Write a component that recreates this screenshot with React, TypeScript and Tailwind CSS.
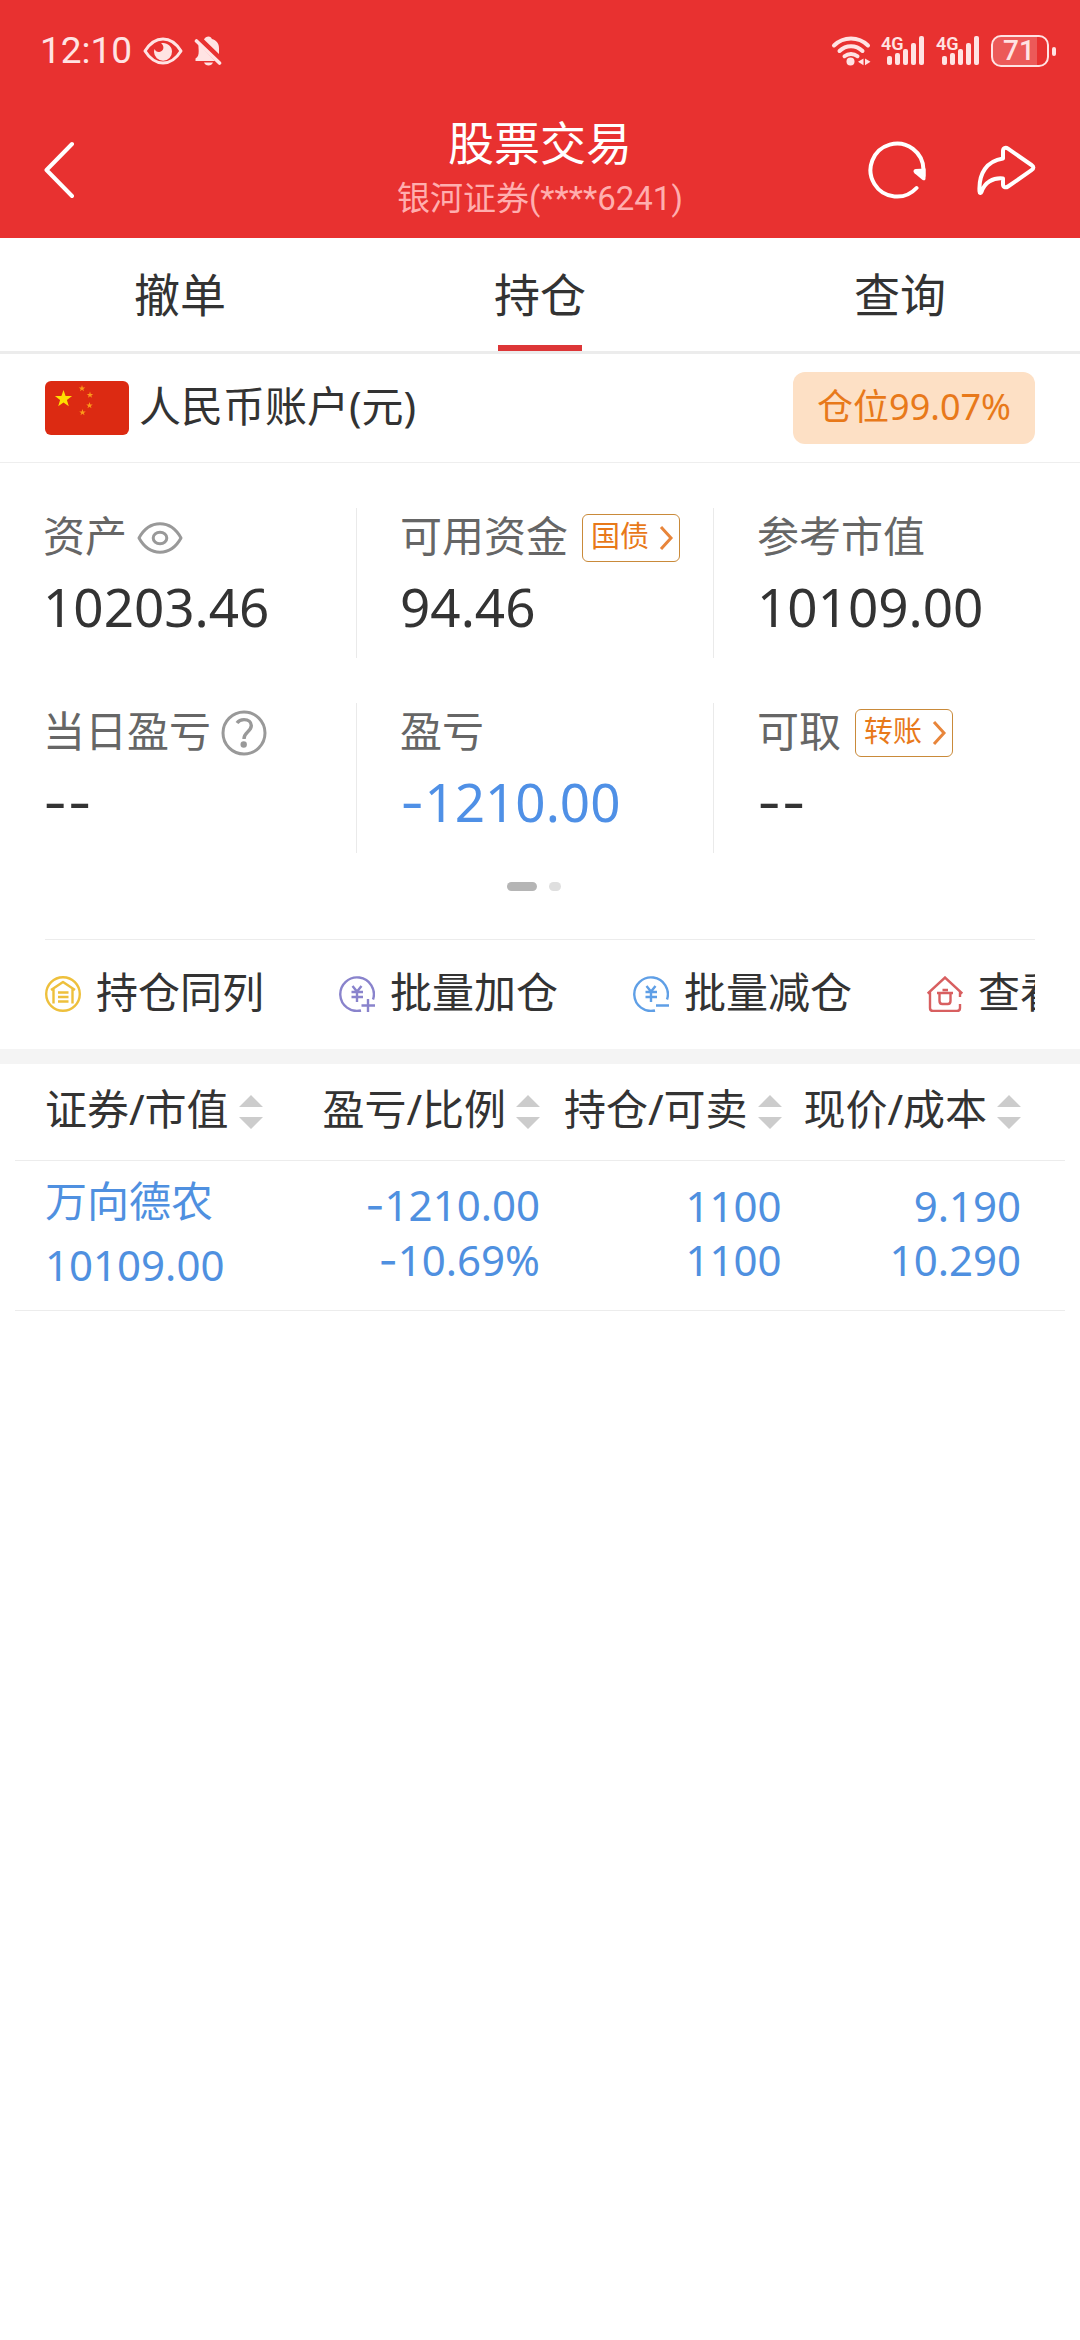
import React from "react";

const FONT = "font-['Noto_Sans','Noto_Sans_CJK_SC',sans-serif]";
const FONT_STATUS = "font-['Roboto','Noto_Sans_CJK_SC',sans-serif]";

function Amount({ value }: { value: string }) {
  const signs = value.match(/^-*/)![0];
  return (
    <>
      {signs && <span className="font-['Inter',sans-serif]">{signs}</span>}
      {value.slice(signs.length)}
    </>
  );
}

function VisibleIcon() {
  return (
    <svg width="40" height="28" viewBox="0 0 40 28" fill="none">
      <path d="M2 14C7 6 13 2 20 2s13 4 18 12c-5 8-11 12-18 12S7 22 2 14Z" stroke="#ffe3e3" strokeWidth="3" strokeLinejoin="round" />
      <path d="M18 6.3c5.5-1.3 11 2.700 11 8.200a9 9 0 0 1-18 .500c0-1 .2-2 .6-3 .8 2 2.400 3.200 4.600 3 3-.3 4.800-3 4-5.700-.4-1.500-1.200-2.400-2.200-3Z" fill="#ffe3e3" />
    </svg>
  );
}

function MutedBellIcon() {
  return (
    <svg width="28" height="30" viewBox="0 0 28 30" fill="#ffe3e3">
      <path d="M10 3.600C10.800 1.400 12.700.5 14.500.5s2.800.9 3.400 2.400c4.500 1.200 7.100 4.500 7.100 9v6L10 3.600Z" />
      <path d="M4.500 8.500 21 25H1.500v-2.400c2.500-1.600 3.200-3.600 3.200-7.600 0-2.300-.4-4.900-.2-6.500Z" />
      <path d="M10 26.500h9c-.8 2-2.400 3-4.500 3s-3.700-1-4.500-3Z" />
      <path d="M2.500 5 25.500 27" stroke="#ffe3e3" strokeWidth="3.600" strokeLinecap="round" />
    </svg>
  );
}

function WifiIcon() {
  return (
    <svg width="40" height="30" viewBox="0 0 40 30" fill="none" stroke="#ffe3e3" strokeWidth="4" strokeLinecap="round">
      <path d="M3 9.500C8 4.600 13.500 2.500 20 2.500S32 4.600 37 9.500" />
      <path d="M8.500 15c3.400-3.300 7-4.800 11.500-4.800s8.100 1.500 11.500 4.800" />
      <path d="M13.500 20.200c2-1.600 4-2.300 6.500-2.300s4.500.7 6.500 2.300" />
      <circle cx="19.500" cy="25.500" r="4" fill="#ffe3e3" stroke="none" />
      <path d="m32.500 22.500-5.500 3.300 5.500 3.400ZM34 22.500l5.500 3.300-5.500 3.400Z" fill="#ffe3e3" stroke="none" />
    </svg>
  );
}

function SignalIcon() {
  return (
    <div className="relative h-[30px] w-[45px]">
      <span className="absolute -top-1 left-0 text-[18px] font-semibold leading-6 text-[#ffe3e3]">4G</span>
      <svg width="45" height="30" viewBox="0 0 45 30" fill="#ffe3e3">
        <rect x="6" y="20" width="5" height="9" rx="2" />
        <rect x="14" y="17" width="5" height="12" rx="2" />
        <rect x="22" y="13" width="5" height="16" rx="2" />
        <rect x="30" y="7" width="5" height="22" rx="2" />
        <rect x="38" y="0" width="5" height="29" rx="2" />
      </svg>
    </div>
  );
}

function Battery({ level }: { level: number }) {
  return (
    <div className="flex items-center gap-[3px]">
      <div className="flex h-8 w-[58px] rounded-[10px] border-2 border-[#ffe3e3]">
        <div className="flex w-[44px] items-center justify-center rounded-l-[7px] bg-white/20">
          <span className="pl-2 text-[28px] font-medium leading-7 text-[#ffe3e3]">{level}</span>
        </div>
      </div>
      <div className="h-[9px] w-1 rounded-sm bg-[#ffe3e3]" />
    </div>
  );
}

function BackIcon() {
  return (
    <svg width="32" height="60" viewBox="0 0 32 60" fill="none" stroke="#fff" strokeWidth="4" strokeLinecap="round" strokeLinejoin="round">
      <path d="M28 4 2.500 30 28 56" />
    </svg>
  );
}

function RefreshIcon() {
  return (
    <svg width="60" height="60" viewBox="0 0 60 60" fill="none">
      <path d="M48.500 48A26.500 26.500 0 1 1 55.500 30v6" stroke="#fff" strokeWidth="4" strokeLinecap="round" />
      <path d="M57.500 28.500v10c0 2-1.800 2.300-3.200 1.200L46.500 33.300c-1.800-1.600-1-4 1.200-4.200Z" fill="#fff" />
    </svg>
  );
}

function ShareIcon() {
  return (
    <svg width="60" height="52" viewBox="0 0 60 52" fill="none" stroke="#fff" strokeWidth="4" strokeLinejoin="round" strokeLinecap="round">
      <path d="M27 14.500V7c0-3 2.500-4 5-2.300L55.500 21c2.500 1.700 2.500 3.500 0 5.200L32 42.500c-2.500 1.700-5 .7-5-2V34.500C17 33.500 8.500 38.500 5.500 48c-.5 1.500-2 1.300-2-.5C2.500 29 11 17 27 14.500Z" />
    </svg>
  );
}

function ChinaFlag() {
  const star = "M0-9 2.100-2.900H8.600L3.400 1 5.300 7.300 0 3.500-5.300 7.300-3.400 1-8.600-2.900H-2.100Z";
  return (
    <svg width="84" height="54" viewBox="0 0 84 54">
      <rect width="84" height="54" rx="6" fill="#dc2a12" />
      <path d={star} transform="translate(18.500 18)" fill="#fedf00" />
      <path d={star} transform="translate(37 7.500) scale(.38)" fill="#fb9a1a" />
      <path d={star} transform="translate(45 14) scale(.38)" fill="#fb9a1a" />
      <path d={star} transform="translate(44.500 24.500) scale(.38)" fill="#fb9a1a" />
      <path d={star} transform="translate(37.500 31.500) scale(.38)" fill="#fb9a1a" />
    </svg>
  );
}

function EyeIcon() {
  return (
    <svg width="46" height="32" viewBox="0 0 46 32" fill="none" stroke="#999" strokeWidth="3" strokeLinejoin="round">
      <path d="M2 16C7.500 6 14.500 1.800 23 1.800S38.500 6 44 16c-5.500 10-12.500 14.200-21 14.200S7.500 26 2 16Z" />
      <ellipse cx="23" cy="16" rx="6.800" ry="5.800" />
    </svg>
  );
}

function HelpIcon() {
  return (
    <svg width="46" height="46" viewBox="0 0 46 46" fill="none" stroke="#999">
      <circle cx="23" cy="23" r="21" strokeWidth="3" />
      <path d="M16 13c1.500-2.200 4-3.400 7-3.400 4.400 0 7.300 2.300 7.300 6 0 2.800-1.300 4.300-3.700 6.400-2.500 2.200-3.600 3.600-3.600 7" strokeWidth="3.400" />
      <circle cx="22.700" cy="34.500" r="3.200" fill="#999" stroke="none" />
    </svg>
  );
}

function SameListIcon() {
  return (
    <svg width="36" height="36" viewBox="0 0 36 36" fill="none" stroke="#eec03c" strokeWidth="2.400">
      <circle cx="18" cy="18" r="16.800" />
      <path d="M6 14 18 6l12 8M8.500 13v14.500M27.500 13v14.500" strokeLinejoin="round" />
      <path d="M13 16.500h10.500M13 21h10.500M13 25.500h10.500" />
    </svg>
  );
}

function BatchAddIcon() {
  return (
    <svg width="36" height="36" viewBox="0 0 36 36" fill="none" stroke="#8983cc" strokeWidth="2.400">
      <path d="M34 23.500A16.800 16.800 0 1 0 22 34.500M29 23v13M22.500 29.500H36" />
      <path d="m13.500 10 4.500 5.500 4.500-5.500M12.500 16h11.500M12.500 21h11.500M18 15.500V26" />
    </svg>
  );
}

function BatchReduceIcon() {
  return (
    <svg width="36" height="36" viewBox="0 0 36 36" fill="none" stroke="#5f9fe6" strokeWidth="2.400">
      <path d="M34 23.500A16.800 16.800 0 1 0 22 34.500M23 29.500h13" />
      <path d="m13.500 10 4.500 5.500 4.500-5.500M12.500 16h11.500M12.500 21h11.500M18 15.500V26" />
    </svg>
  );
}

function ViewHouseIcon() {
  return (
    <svg width="36" height="36" viewBox="0 0 36 36" fill="none" stroke="#d85f60" strokeWidth="2.400">
      <path d="M33 21V15M33 28v4c0 2-1 3-3 3H6c-2 0-3-1-3-3V15M.7 17.500 18 1.500l17.300 16" />
      <path d="M10 17h16M15.500 14h5.500M12.500 17v8c0 2 .8 3 2.800 3h5.400c2 0 2.800-1 2.800-3v-8" />
    </svg>
  );
}

function SortIcon() {
  return (
    <svg className="shrink-0" width="24" height="34" viewBox="0 0 24 34" fill="#ccc">
      <path d="M12 0 24 12H0ZM12 34 24 22H0Z" />
    </svg>
  );
}

function Tag({ label }: { label: string }) {
  return (
    <button className="ml-1 flex h-12 items-center gap-2 rounded-md border border-[#c98a3a] pl-2 pr-1 text-[29px] leading-10 text-[#e8791a]">
      <span className="pb-1">{label}</span>
      <svg width="18" height="26" viewBox="0 0 18 26" fill="none" stroke="#e8853a" strokeWidth="3">
        <path d="m4 2 10 11L4 24" />
      </svg>
    </button>
  );
}

const metrics: { label: string; value: string; extra?: React.ReactNode; down?: boolean }[] = [
  { label: "资产", value: "10203.46", extra: <button aria-label="隐藏资产"><EyeIcon /></button> },
  { label: "可用资金", value: "94.46", extra: <Tag label="国债" /> },
  { label: "参考市值", value: "10109.00" },
  { label: "当日盈亏", value: "--", extra: <button aria-label="说明"><HelpIcon /></button> },
  { label: "盈亏", value: "-1210.00", down: true },
  { label: "可取", value: "--", extra: <Tag label="转账" /> },
];

const actions = [
  { label: "持仓同列", icon: <SameListIcon /> },
  { label: "批量加仓", icon: <BatchAddIcon /> },
  { label: "批量减仓", icon: <BatchReduceIcon /> },
  { label: "查看", icon: <ViewHouseIcon /> },
];

const columns = ["证券/市值", "盈亏/比例", "持仓/可卖", "现价/成本"];

const holdings = [
  {
    name: "万向德农",
    marketValue: "10109.00",
    pairs: [["-1210.00", "-10.69%"], ["1100", "1100"], ["9.190", "10.290"]],
  },
];

export default function App() {
  return (
    <div className={`min-h-screen bg-white text-[#333] ${FONT}`}>
      <header className="bg-[#e83130] text-white">
        <div className={`flex h-[102px] items-center justify-between pl-10 pr-6 ${FONT_STATUS}`}>
          <div className="flex items-center gap-[11px]">
            <span className="text-[37px] leading-10 text-[#ffe3e3]">12:10</span>
            <VisibleIcon />
            <MutedBellIcon />
          </div>
          <div className="flex items-center gap-[10px]">
            <WifiIcon />
            <SignalIcon />
            <SignalIcon />
            <Battery level={71} />
          </div>
        </div>
        <div className="grid h-[136px] grid-cols-[1fr_auto_1fr] items-center px-11">
          <button aria-label="返回" className="justify-self-start">
            <BackIcon />
          </button>
          <div className="self-start pt-[10px] text-center">
            <h1 className="text-[46px] leading-[60px]">股票交易</h1>
            <p className={`pt-[2px] text-[33px] leading-[50px] text-[#ffaeae] ${FONT_STATUS}`}>银河证券(****6241)</p>
          </div>
          <div className="flex items-center gap-12 justify-self-end">
            <button aria-label="刷新"><RefreshIcon /></button>
            <button aria-label="分享"><ShareIcon /></button>
          </div>
        </div>
      </header>

      <nav className="grid h-[116px] grid-cols-3 border-b-[3px] border-[#ececec] text-[46px]">
        {["撤单", "持仓", "查询"].map((tab) => (
          <button key={tab} className="relative">
            {tab}
            {tab === "持仓" && (
              <span className="absolute bottom-0 left-1/2 h-[6px] w-[84px] -translate-x-1/2 bg-[#dd3637]" />
            )}
          </button>
        ))}
      </nav>

      <section className="flex h-[109px] items-center justify-between border-b border-[#eee] px-[45px]">
        <div className="flex items-center gap-[10px] text-[42px]">
          <ChinaFlag />
          <h2 className="pb-[6px]">人民币账户(元)</h2>
        </div>
        <button className="h-[72px] rounded-xl bg-[#fde0c5] px-6 pb-[2px] text-[36px] text-[#e8791a]">仓位99.07%</button>
      </section>

      <section className="pt-[45px]">
        <dl className="grid grid-cols-3 gap-y-[45px] pr-[9px]">
          {metrics.map((m, i) => (
            <div key={m.label} className={`h-[150px] pl-[43px] ${i % 3 < 2 ? "border-r border-[#eaeaea]" : ""}`}>
              <dt className="flex h-[60px] items-center gap-[10px] text-[42px] text-[#666]">
                <span className="pb-[6px]">{m.label}</span>
                {m.extra}
              </dt>
              <dd className={`text-[53px] leading-[78px] ${m.down ? "text-[#4f90e6]" : ""}`}>
                <Amount value={m.value} />
              </dd>
            </div>
          ))}
        </dl>
        <div className="mt-[29px] flex justify-center gap-3 pr-3">
          <span className="h-[9px] w-[30px] rounded-full bg-[#b5b5b5]" />
          <span className="h-[9px] w-3 rounded-full bg-[#dfdfdf]" />
        </div>
      </section>

      <section className="mx-[45px] mt-12 flex h-[110px] items-center gap-[75px] overflow-hidden border-t border-[#ececec]">
        {actions.map((a) => (
          <button key={a.label} className="flex shrink-0 items-center gap-[15px] pb-[2px] text-[42px]">
            {a.icon}
            <span className="pb-1">{a.label}</span>
          </button>
        ))}
      </section>

      <div className="h-[15px] bg-[#f4f4f4]" />

      <section className="mx-[15px]">
        <table className="w-full table-fixed text-[42px]">
          <thead>
            <tr className="h-24 border-b border-[#ececec]">
              {columns.map((c, i) => (
                <th key={c} className={`p-0 font-normal ${i === 0 ? "w-[27%] pl-[30px]" : i === 3 ? "w-[27%] pr-11" : "w-[23%]"}`}>
                  <button className={`flex w-full items-center gap-[10px] whitespace-nowrap ${i === 0 ? "" : "justify-end"}`}>
                    <span className="pb-[6px]">{c}</span>
                    <SortIcon />
                  </button>
                </th>
              ))}
            </tr>
          </thead>
          <tbody>
            {holdings.map((h) => (
              <tr key={h.name} className="h-[150px] border-b border-[#ececec] text-[#4f90e0]">
                <td className="p-0 pb-1 pl-[30px] leading-[64px]">
                  <div>{h.name}</div>
                  <div>{h.marketValue}</div>
                </td>
                {h.pairs.map(([top, bottom], i) => (
                  <td key={i} className={`p-0 pb-1 text-right leading-[54px] ${i === 2 ? "pr-11" : ""}`}>
                    <div><Amount value={top} /></div>
                    <div><Amount value={bottom} /></div>
                  </td>
                ))}
              </tr>
            ))}
          </tbody>
        </table>
      </section>
    </div>
  );
}
